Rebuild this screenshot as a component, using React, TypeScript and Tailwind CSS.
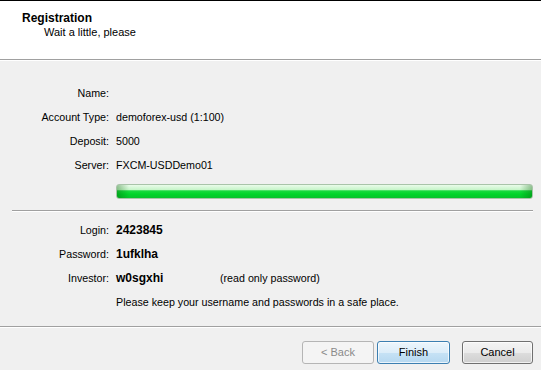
import React from "react";

const Row = ({ label, children }: { label: string; children?: React.ReactNode }) => (
  <div className="flex h-[24px] items-center">
    <div className="w-[110px] pr-[1px] text-right">{label}</div>
    <div className="flex items-center pl-[6px]">{children}</div>
  </div>
);

export default function App() {
  return (
    <div
      className="flex h-[384px] w-[541px] flex-col overflow-hidden bg-white text-[10.7px] text-black"
      style={{ fontFamily: '"Liberation Sans", Arial, sans-serif' }}
    >
      <div className="h-[1px] bg-black" />
      <div className="flex h-[58px] flex-col bg-white pt-[10px]">
        <div className="pl-[22px] text-[12px] font-bold leading-[14px]">Registration</div>
        <div className="pl-[44px] text-[11px] leading-[14px]">Wait a little, please</div>
      </div>
      <div className="h-[1px] bg-[#a0a0a0]" />
      <div className="h-[1px] bg-white" />
      <div className="flex h-[265px] flex-col bg-[#f0f0f0] pt-[20px]">
        <Row label="Name:" />
        <Row label="Account Type:">demoforex-usd (1:100)</Row>
        <Row label="Deposit:">5000</Row>
        <Row label="Server:">FXCM-USDDemo01</Row>
        <div className="mt-[7px] ml-[116px] mr-[8px] h-[15px] rounded-[3px] border border-[#a9c4a9] bg-[linear-gradient(to_right,rgba(0,90,0,0.35)_0px,rgba(0,90,0,0)_12px,rgba(0,90,0,0)_calc(100%-12px),rgba(0,90,0,0.35)_100%),linear-gradient(to_bottom,#eafcea_0%,#c8f5ca_35%,#1ada40_45%,#00d52a_70%,#08c22c_100%)]" />
        <div className="mt-[11px] ml-[12px] mr-[8px] h-[1px] bg-[#a0a0a0]" />
        <div className="ml-[12px] mr-[8px] h-[1px] bg-white" />
        <div className="mt-[6px] flex flex-col">
          <Row label="Login:">
            <span className="text-[12px] font-bold">2423845</span>
          </Row>
          <Row label="Password:">
            <span className="text-[12px] font-bold">1ufklha</span>
          </Row>
          <Row label="Investor:">
            <span className="w-[104px] text-[12px] font-bold">w0sgxhi</span>
            <span>(read only password)</span>
          </Row>
          <Row label="">Please keep your username and passwords in a safe place.</Row>
        </div>
      </div>
      <div className="h-[1px] bg-[#a0a0a0]" />
      <div className="h-[1px] bg-white" />
      <div className="flex h-[42px] items-start bg-[#f0f0f0] pt-[13px] text-[11px]">
        <div className="ml-[302px] flex h-[23px] w-[72px] items-center justify-center rounded-[3px] border border-[#b5b5b5] bg-[#f4f4f4] text-[#8a8a8a]">
          &lt; Back
        </div>
        <div className="ml-[3px] flex h-[23px] w-[73px] items-center justify-center rounded-[3px] border border-[#3c7fb1] bg-[linear-gradient(to_bottom,#edf6fc_0%,#dcedf9_50%,#c6e2f5_51%,#b6d8f0_100%)] shadow-[inset_0_0_0_1px_rgba(255,255,255,0.7)]">
          Finish
        </div>
        <div className="ml-[12px] flex h-[23px] w-[71px] items-center justify-center rounded-[3px] border border-[#707070] bg-[linear-gradient(to_bottom,#f4f4f4_0%,#ebebeb_50%,#dddddd_51%,#cfcfcf_100%)] shadow-[inset_0_0_0_1px_rgba(255,255,255,0.7)]">
          Cancel
        </div>
      </div>
      <div className="flex-1 bg-white" />
    </div>
  );
}
